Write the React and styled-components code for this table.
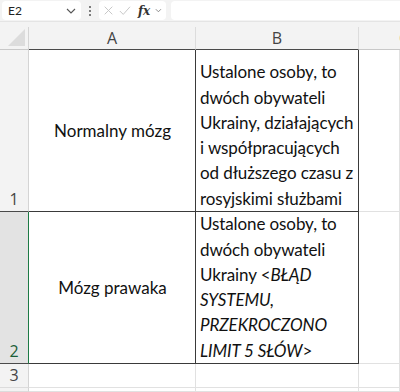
import React from "react";
import styled, { createGlobalStyle } from "styled-components";

const Global = createGlobalStyle`
  body { margin: 0; background: #fff; font-family: "Lato", "Liberation Sans", sans-serif; }
`;

const Page = styled.div`
  width: 400px;
  height: 392px;
  overflow: hidden;
  background: #f3f3f3;
  display: flex;
  flex-direction: column;
`;

const Toolbar = styled.div`
  flex-shrink: 0;
  height: 22px;
  display: flex;
  align-items: center;
  padding: 1px 0 1px 2px;
  box-sizing: border-box;
  border-bottom: 1px solid #e4e4e4;
`;

const NameBox = styled.div`
  width: 79px;
  height: 19px;
  box-sizing: border-box;
  background: #fff;
  border-radius: 4px;
  display: flex;
  align-items: center;
  justify-content: space-between;
  padding: 0 5px 0 6px;
  font-size: 12px;
  color: #222;
`;

const Dots = styled.div`
  width: 18px;
  display: flex;
  flex-direction: column;
  align-items: center;
  gap: 2px;
  span { width: 2px; height: 2px; border-radius: 1px; background: #555; }
`;

const FxBox = styled.div`
  width: 67px;
  height: 19px;
  box-sizing: border-box;
  background: #fff;
  border-radius: 4px;
  display: flex;
  align-items: center;
  gap: 5px;
  padding: 0 4px;
`;

const Fx = styled.span`
  font-family: "DejaVu Serif", "Liberation Serif", serif;
  font-style: italic;
  font-weight: bold;
  font-size: 12px;
  color: #333;
  margin-left: 2px;
`;

const Formula = styled.div`
  flex: 1;
  height: 19px;
  margin-left: 5px;
  background: #fff;
  border-radius: 4px 0 0 4px;
`;

const Gap = styled.div`
  flex-shrink: 0;
  height: 5px;
`;

const Sheet = styled.div`
  flex: 1;
  min-height: 0;
  display: grid;
  grid-template-columns: 29px 167px 163px 1fr;
  grid-template-rows: 23px 162px 152px 24px 1fr;
  background: #fff;
`;

const Corner = styled.div`
  background: #f3f3f3;
  border-right: 1px solid #d4d4d4;
  border-bottom: 1px solid #c8c8c8;
  display: flex;
  align-items: flex-end;
  justify-content: flex-end;
  padding: 0 3px 3px 0;
`;

const ColHead = styled.div`
  background: #f3f3f3;
  border-right: 1px solid #dcdcdc;
  border-bottom: 1px solid ${(p) => (p.$dark ? "#4a4a4a" : "#c8c8c8")};
  display: flex;
  align-items: center;
  justify-content: center;
  font-family: "Open Sans", "Liberation Sans", sans-serif;
  font-size: 16px;
  color: #444;
  overflow: hidden;
  white-space: nowrap;
`;

const ColHeadC = styled(ColHead)`
  justify-content: flex-end;
  margin-right: -9px;
  border-right: none;
`;

const RowHead = styled.div`
  min-height: 0;
  overflow: hidden;
  background: ${(p) => (p.$active ? "#e3e3e3" : "#f3f3f3")};
  border-right: ${(p) => (p.$active ? "1px solid #1d7a45" : "1px solid #d4d4d4")};
  border-bottom: 1px solid ${(p) => (p.$dark ? "#4a4a4a" : "#dcdcdc")};
  display: flex;
  align-items: flex-end;
  justify-content: center;
  font-family: "Open Sans", "Liberation Sans", sans-serif;
  font-size: 16px;
  line-height: 23px;
  color: ${(p) => (p.$active ? "#1b5e38" : "#444")};
`;

const Cell = styled.div`
  min-height: 0;
  box-sizing: border-box;
  border-right: 1px solid ${(p) => (p.$dark ? "#3a3a3a" : "#e1e1e1")};
  border-bottom: 1px solid ${(p) => (p.$dark ? "#3a3a3a" : "#e1e1e1")};
  font-size: 17px;
  color: #111;
  display: flex;
  align-items: ${(p) => (p.$center ? "center" : "flex-end")};
  justify-content: ${(p) => (p.$center ? "center" : "flex-start")};
  padding: 0 3px 0 4px;
  overflow: hidden;
`;

const Wrap = styled.div`
  white-space: pre;
  line-height: 25.3px;
  letter-spacing: -0.1px;
`;

const Err = styled.i`
  font-style: italic;
`;

const Chevron = () => (
  <svg width="10" height="6" viewBox="0 0 10 6">
    <path d="M1 1l4 4 4-4" fill="none" stroke="#555" strokeWidth="1.1" />
  </svg>
);

export default function App() {
  return (
    <Page>
      <Global />
      <Toolbar>
        <NameBox>
          <span>E2</span>
          <Chevron />
        </NameBox>
        <Dots>
          <span />
          <span />
          <span />
        </Dots>
        <FxBox>
          <svg width="13" height="13" viewBox="0 0 13 13">
            <path d="M2 2l9 9M11 2l-9 9" stroke="#c4c4c4" strokeWidth="1.1" />
          </svg>
          <svg width="14" height="12" viewBox="0 0 14 12">
            <path d="M1 6l4 4 8-9" fill="none" stroke="#c4c4c4" strokeWidth="1.1" />
          </svg>
          <Fx>fx</Fx>
          <svg width="8" height="5" viewBox="0 0 8 5">
            <path d="M1 1l3 3 3-3" fill="none" stroke="#777" strokeWidth="1" />
          </svg>
        </FxBox>
        <Formula />
      </Toolbar>
      <Gap />
      <Sheet>
        <Corner>
          <svg width="17" height="17" viewBox="0 0 17 17">
            <path d="M17 0V17H0Z" fill="#dcdcdc" />
          </svg>
        </Corner>
        <ColHead $dark>A</ColHead>
        <ColHead $dark>B</ColHead>
        <ColHeadC>C</ColHeadC>

        <RowHead $dark>1</RowHead>
        <Cell $dark $center>Normalny mózg</Cell>
        <Cell $dark>
          <Wrap>
            {"Ustalone osoby, to\ndwóch obywateli\nUkrainy, działających\ni współpracujących\nod dłuższego czasu z\nrosyjskimi służbami"}
          </Wrap>
        </Cell>
        <Cell />

        <RowHead $active $dark>2</RowHead>
        <Cell $dark $center>Mózg prawaka</Cell>
        <Cell $dark>
          <Wrap>
            {"Ustalone osoby, to\ndwóch obywateli\nUkrainy <"}
            <Err>{"BŁĄD\nSYSTEMU,\nPRZEKROCZONO\nLIMIT 5 SŁÓW"}</Err>
            {">"}
          </Wrap>
        </Cell>
        <Cell />

        <RowHead>3</RowHead>
        <Cell />
        <Cell />
        <Cell />

        <RowHead />
        <Cell />
        <Cell />
        <Cell />
      </Sheet>
    </Page>
  );
}
